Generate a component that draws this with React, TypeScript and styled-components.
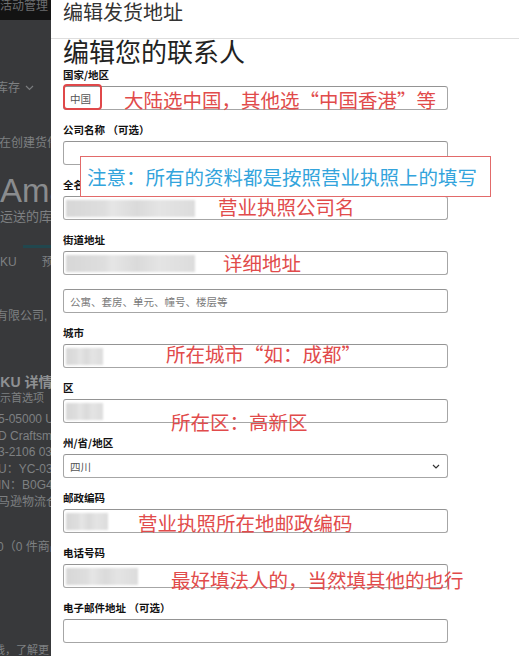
import styled, { createGlobalStyle } from "styled-components";

const GlobalStyle = createGlobalStyle`
  html, body {
    margin: 0;
    padding: 0;
    background: #fff;
  }
  body {
    font-family: "Liberation Sans", "Noto Sans CJK SC", sans-serif;
    overflow: hidden;
  }
`;

type Note = { text: string; x: number; y: number };

type FieldDef = {
  label: string;
  blur?: number;
  value?: string;
  placeholder?: string;
  select?: boolean;
  note?: Note;
};

const fields: FieldDef[] = [
  { label: "全名", blur: 129, note: { text: "营业执照公司名", x: 154, y: -2 } },
];

const lower: FieldDef[] = [
  { label: "城市", blur: 37, note: { text: "所在城市“如：成都”", x: 102, y: -3 } },
  { label: "区", blur: 37, note: { text: "所在区：高新区", x: 107, y: 10 } },
  { label: "州/省/地区", value: "四川", select: true },
  { label: "邮政编码", blur: 42, note: { text: "营业执照所在地邮政编码", x: 74, y: 1 } },
  { label: "电话号码", blur: 72, note: { text: "最好填法人的，当然填其他的也行", x: 107, y: 3 } },
  { label: "电子邮件地址 （可选）" },
];

function FieldInput({ f }: { f: FieldDef }) {
  return (
    <InputBox>
      {f.blur ? <Blur $w={f.blur} /> : null}
      {f.value ? <Value>{f.value}</Value> : null}
      {f.placeholder ? <Placeholder>{f.placeholder}</Placeholder> : null}
      {f.select ? (
        <Chevron width="8" height="5" viewBox="0 0 8 5">
          <path d="M1 1l3 3 3-3" fill="none" stroke="#333" strokeWidth="1.2" />
        </Chevron>
      ) : null}
      {f.note ? (
        <Annotation $x={f.note.x} $y={f.note.y}>
          {f.note.text}
        </Annotation>
      ) : null}
    </InputBox>
  );
}

function Field({ f }: { f: FieldDef }) {
  return (
    <FieldGroup>
      <Label>{f.label}</Label>
      <FieldInput f={f} />
    </FieldGroup>
  );
}

function BackgroundPage() {
  return (
    <BackPage>
      <TopBar>活动管理</TopBar>
      <BgLine $mt={60} $indent={-4}>
        库存
        <NavChevron width="9" height="6" viewBox="0 0 9 6">
          <path d="M1 1l3.5 3.5L8 1" fill="none" stroke="#7a7c7e" strokeWidth="1.2" />
        </NavChevron>
      </BgLine>
      <BgLine $mt={39} $indent={-1}>在创建货件</BgLine>
      <PageTitle>Ama</PageTitle>
      <BgLine $mt={0} $size={13}>运送的库存</BgLine>
      <TabBar />
      <TabRow>
        <span>KU</span>
        <span>预分</span>
      </TabRow>
      <BgLine $mt={38} $indent={-4}>有限公司, 企</BgLine>
      <BgLine $mt={50} $indent={-9} $size={14} $bold>
        SKU 详情
      </BgLine>
      <BgLine $mt={0} $indent={-11} $size={11}>
        显示首选项
      </BgLine>
      <DetailList>
        <div>5-05000 U</div>
        <div>D Craftsman</div>
        <div>3-2106 039</div>
        <div>U：YC-039</div>
        <div>IN：B0G4</div>
        <div>马逊物流仓</div>
      </DetailList>
      <BgLine $mt={29} $indent={-3}>0（0 件商品</BgLine>
      <BgLine $mt={87} $indent={-6} $size={11}>
        钱，了解更
      </BgLine>
    </BackPage>
  );
}

export default function App() {
  return (
    <>
      <GlobalStyle />
      <Screen>
        <BackgroundPage />
        <Modal>
          <ModalHeader>编辑发货地址</ModalHeader>
          <Form>
            <Title>编辑您的联系人</Title>
            <FieldGroup>
              <Label>国家/地区</Label>
              <InputBox>
                <Value>中国</Value>
                <Highlight />
                <Annotation $x={60} $y={1}>
                  大陆选中国，其他选“中国香港”等
                </Annotation>
              </InputBox>
            </FieldGroup>
            <FieldGroup>
              <Label>公司名称 （可选）</Label>
              <InputBox>
                <Notice>注意：所有的资料都是按照营业执照上的填写</Notice>
              </InputBox>
            </FieldGroup>
            {fields.map((f) => (
              <Field key={f.label} f={f} />
            ))}
            <FieldGroup>
              <Label>街道地址</Label>
              <FieldInput f={{ label: "", blur: 129, note: { text: "详细地址", x: 159, y: -1 } }} />
              <SecondLine>
                <FieldInput f={{ label: "", placeholder: "公寓、套房、单元、幢号、楼层等" }} />
              </SecondLine>
            </FieldGroup>
            {lower.map((f) => (
              <Field key={f.label} f={f} />
            ))}
          </Form>
        </Modal>
      </Screen>
    </>
  );
}

const Screen = styled.div`
  display: flex;
  width: 519px;
  height: 656px;
  overflow: hidden;
`;

const BackPage = styled.div`
  width: 51px;
  flex-shrink: 0;
  background: #38393b;
  color: #7e8082;
  font-size: 12px;
  white-space: nowrap;
  overflow: hidden;
`;

const TopBar = styled.div`
  height: 20px;
  background: #131313;
  color: #6c6e70;
  font-size: 12px;
  line-height: 12px;
`;

const BgLine = styled.div<{ $mt: number; $indent?: number; $size?: number; $bold?: boolean }>`
  display: flex;
  align-items: center;
  margin-top: ${(p) => p.$mt}px;
  margin-left: ${(p) => p.$indent ?? 0}px;
  font-size: ${(p) => p.$size ?? 12}px;
  font-weight: ${(p) => (p.$bold ? 700 : 400)};
  color: ${(p) => (p.$bold ? "#8e9092" : "#7e8082")};
  line-height: 16px;
`;

const NavChevron = styled.svg`
  margin-left: 5px;
`;

const PageTitle = styled.div`
  margin-top: 22px;
  font-size: 33px;
  line-height: 36px;
  color: #8a8c8e;
`;

const TabBar = styled.div`
  margin: 20px 0 0 23px;
  height: 3px;
  background: #21474e;
`;

const TabRow = styled.div`
  display: flex;
  gap: 25px;
  margin-top: 6px;
  line-height: 16px;
`;

const DetailList = styled.div`
  margin-top: 5px;
  margin-left: -2px;
  line-height: 16.5px;
  font-size: 12px;
`;

const Modal = styled.div`
  flex: 1;
  min-width: 0;
  background: #fff;
  display: flex;
  flex-direction: column;
`;

const ModalHeader = styled.div`
  box-sizing: border-box;
  height: 39px;
  border-bottom: 1px solid #dedede;
  padding-left: 12px;
  font-family: "Noto Sans CJK SC", sans-serif;
  font-size: 20px;
  line-height: 24px;
  color: #333;
`;

const Form = styled.div`
  padding: 0 12px;
  font-family: "Noto Sans CJK SC", sans-serif;
`;

const Title = styled.h2`
  margin: 0 0 5px;
  font-size: 26px;
  line-height: 24px;
  font-weight: 400;
  color: #222;
`;

const FieldGroup = styled.div`
  margin-bottom: 13px;
`;

const SecondLine = styled.div`
  margin-top: 14px;
`;

const Label = styled.div`
  font-size: 10.5px;
  line-height: 14px;
  font-weight: 700;
  color: #111;
  margin-bottom: 4px;
`;

const InputBox = styled.div`
  position: relative;
  box-sizing: border-box;
  width: 385px;
  height: 24px;
  border: 1px solid #a6a6a6;
  border-top-color: #949494;
  border-radius: 3px;
  background: #fff;
  display: flex;
  align-items: center;
  padding: 0 6px;
`;

const Blur = styled.span<{ $w: number }>`
  display: block;
  width: ${(p) => p.$w}px;
  height: 17px;
  margin-left: -4px;
  background: linear-gradient(
    90deg,
    #d7d7d7 0%,
    #dedede 30%,
    #e6e6e6 36%,
    #dadada 55%,
    #e4e4e4 72%,
    #dcdcdc 100%
  );
  filter: blur(1.3px);
`;

const Value = styled.span`
  font-size: 10.5px;
  color: #555;
`;

const Placeholder = styled.span`
  font-size: 10.5px;
  color: #7a7a7a;
`;

const Chevron = styled.svg`
  margin-left: auto;
  margin-right: 1px;
`;

const Highlight = styled.div`
  position: absolute;
  left: -1px;
  top: -3px;
  width: 39px;
  height: 26px;
  box-sizing: border-box;
  border: 2px solid #e0484a;
  border-radius: 4px;
`;

const Annotation = styled.div<{ $x: number; $y: number }>`
  position: absolute;
  left: ${(p) => p.$x}px;
  top: ${(p) => p.$y}px;
  font-size: 19.5px;
  line-height: 24px;
  color: #e14b4b;
  white-space: nowrap;
  pointer-events: none;
`;

const Notice = styled.div`
  position: absolute;
  left: 16px;
  top: 14px;
  z-index: 2;
  box-sizing: border-box;
  width: 411px;
  height: 41px;
  border: 1px solid #e26a6a;
  background: #fff;
  padding-left: 6px;
  display: flex;
  align-items: center;
  font-size: 19.5px;
  color: #33a4dc;
  white-space: nowrap;
`;
